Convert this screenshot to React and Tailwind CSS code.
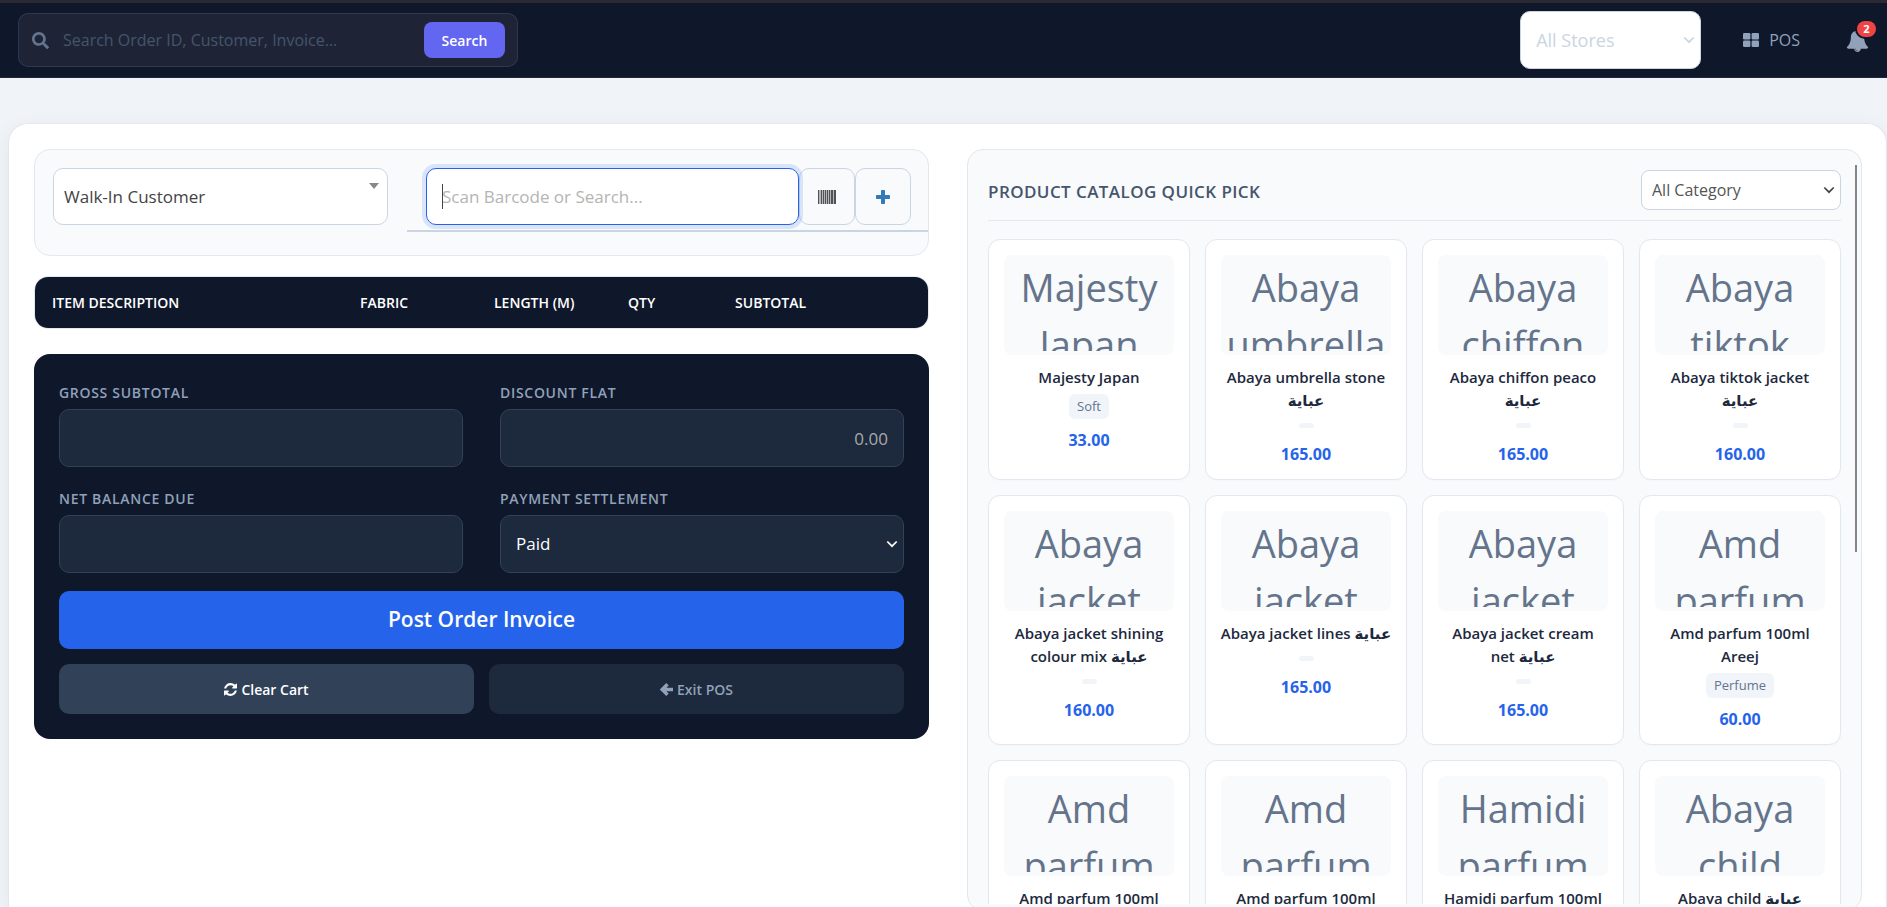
import React from "react";
import { FaSearch } from "react-icons/fa";

const products = [
  { alt: "Majesty Japan", name: "Majesty Japan", tag: "Soft", price: "33.00" },
  { alt: "Abaya umbrella stone", name: "Abaya umbrella stone\nعباية", price: "165.00" },
  { alt: "Abaya chiffon peaco", name: "Abaya chiffon peaco\nعباية", price: "165.00" },
  { alt: "Abaya tiktok jacket", name: "Abaya tiktok jacket\nعباية", price: "160.00" },
  { alt: "Abaya jacket shining", name: "Abaya jacket shining\ncolour mix عباية", price: "160.00" },
  { alt: "Abaya jacket lines", name: "Abaya jacket lines عباية", price: "165.00" },
  { alt: "Abaya jacket cream", name: "Abaya jacket cream\nnet عباية", price: "165.00" },
  { alt: "Amd parfum 100ml", name: "Amd parfum 100ml\nAreej", tag: "Perfume", price: "60.00" },
  { alt: "Amd parfum", name: "Amd parfum 100ml", tag: "Perfume", price: "60.00" },
  { alt: "Amd parfum", name: "Amd parfum 100ml", tag: "Perfume", price: "60.00" },
  { alt: "Hamidi parfum", name: "Hamidi parfum 100ml", tag: "Perfume", price: "60.00" },
  { alt: "Abaya child", name: "Abaya child عباية", price: "160.00" },
];

function Chevron({ className }) {
  return (
    <svg viewBox="0 0 12 8" fill="none" stroke="currentColor" strokeWidth="1.700" className={`pointer-events-none absolute top-1/2 h-2 w-3 -translate-y-1/2 ${className}`}>
      <path d="M1.300 1.500 6 6.200l4.700-4.700" />
    </svg>
  );
}

function GridIcon() {
  return (
    <svg viewBox="0 0 16 14" fill="currentColor" className="h-3.5 w-4">
      <rect x="0" y="0" width="7.400" height="6.400" rx="1.200" />
      <rect x="8.600" y="0" width="7.400" height="6.400" rx="1.200" />
      <rect x="0" y="7.600" width="7.400" height="6.400" rx="1.200" />
      <rect x="8.600" y="7.600" width="7.400" height="6.400" rx="1.200" />
    </svg>
  );
}

function BellIcon() {
  return (
    <svg viewBox="0 0 1792 1792" fill="currentColor" className="size-[23px]">
      <path d="M912 1696q0-16-16-16-59 0-101.500-42.500T752 1536q0-16-16-16t-16 16q0 73 51.500 124.500T896 1712q16 0 16-16zm816-288q0 52-38 90t-90 38h-448q0 106-75 181t-181 75-181-75-75-181H192q-52 0-90-38t-38-90q50-42 91-88t85-119.500 74.500-158.500 50-206T384 576q0-152 117-282.500T808 135q-8-19-8-39 0-40 28-68t68-28 68 28 28 68q0 20-8 39 190 28 307 158.500T1408 576q0 139 19.500 260t50 206 74.500 158.500 85 119.500 91 88z" />
    </svg>
  );
}

function BarcodeIcon() {
  return (
    <svg viewBox="0 0 18 14" className="h-3.5 w-[18px]">
      <path fill="#b4b6ba" d="M0 0h18v14H0z" />
      <path fill="#505256" d="M0 0h1v14H0zM3 0h1v14H3zM5 0h1v14H5zM7 0h1v14H7zM9 0h1v14H9zM11 0h1v14h-1zM13 0h2v14h-2zM16 0h2v14h-2z" />
    </svg>
  );
}

function PlusIcon() {
  return (
    <svg viewBox="0 0 14 14" fill="currentColor" className="size-3.5">
      <path d="M5.800 0h2.400q.8 0 .8.800V5h4.200q.8 0 .8.800v2.400q0 .8-.8.800H9v4.200q0 .8-.8.800H5.800q-.8 0-.8-.8V9H.8Q0 9 0 8.200V5.800Q0 5 .8 5H5V.8Q5 0 5.800 0z" />
    </svg>
  );
}

function ArrowIcon() {
  return (
    <svg viewBox="0 0 13 13" fill="none" stroke="currentColor" strokeWidth="3.400" className="size-[13px]">
      <path d="M7.500 1.200 2.200 6.500l5.300 5.300M2.500 6.500H13" />
    </svg>
  );
}

function RefreshIcon() {
  return (
    <svg viewBox="0 0 1536 1536" fill="currentColor" className="size-[13px]">
      <path d="M1511 928q0 5-1 7-64 268-268 434.500T764 1536q-146 0-282.500-55T238 1324l-129 129q-19 19-45 19t-45-19-19-45V960q0-26 19-45t45-19h448q26 0 45 19t19 45-19 45l-137 137q71 66 161 102t187 36q134 0 250-65t186-179q11-17 53-117 8-23 30-23h192q13 0 22.500 9.500t9.500 22.500zm25-800v448q0 26-19 45t-45 19h-448q-26 0-45-19t-19-45 19-45l138-138Q969 256 768 256q-134 0-250 65T332 500q-11 17-53 117-8 23-30 23H50q-13 0-22.500-9.500T18 608v-7q65-268 270-434.500T768 0q146 0 284 55.500T1297 212l130-129q19-19 45-19t45 19 19 45z" />
    </svg>
  );
}

function Field({ id, label, children }) {
  return (
    <div>
      <label htmlFor={id} className="mb-1.5 block text-[14px] leading-5 font-semibold tracking-wider text-slate-400">{label}</label>
      {children}
    </div>
  );
}

function Product({ p }) {
  return (
    <article className="rounded-xl border border-slate-200 bg-white p-[15px] text-center shadow-[0_1px_3px_rgba(0,0,0,0.02)]">
      <div className="h-[100px] rounded-lg bg-slate-50 p-1">
        <div role="img" aria-label={p.alt} className="h-full overflow-hidden text-[38px] leading-[57px] text-[#64748b]">{p.alt}</div>
      </div>
      <h3 className="-mx-2 mt-[11px] text-[15px] leading-[23px] font-semibold whitespace-pre-line text-slate-800">{p.name}</h3>
      {p.tag ? (
        <span className="mx-auto mt-[5px] mb-[11px] block w-fit rounded-md bg-slate-100 px-2 text-[13px] leading-[25px] text-slate-500">{p.tag}</span>
      ) : (
        <span className="mx-auto mt-[11px] mb-4 block h-[5px] w-[15px] rounded-md bg-slate-100" />
      )}
      <p className="text-[16px] leading-5 font-bold text-[#2563eb]">{p.price}</p>
    </article>
  );
}

export default function App() {
  const darkInput = "block h-[58px] w-full rounded-[10px] border border-slate-700 bg-slate-800 px-[15px] text-[17px] outline-none";
  const addon = "flex h-[57px] w-14 shrink-0 items-center justify-center rounded-[10px] border border-slate-300 bg-slate-50 text-[#337ab7]";
  return (
    <div className="flex h-screen flex-col overflow-hidden bg-[#f0f3f8] font-['Open_Sans','Noto_Sans','DejaVu_Sans',sans-serif] text-slate-800">
      <header className="flex h-[78px] shrink-0 items-center justify-between border-t-[3px] border-b border-t-[#2b2a33] border-b-slate-800 bg-slate-900 pr-[11px] pl-[18px]">
        <form className="flex h-[54px] w-[500px] items-center rounded-[10px] border border-slate-700/70 bg-[#1e2436] pr-3 pl-[13px]">
          <FaSearch className="size-[17px] text-slate-500" />
          <input aria-label="Search" placeholder="Search Order ID, Customer, Invoice..." className="min-w-0 flex-1 bg-transparent pl-3.5 text-[16px] outline-none placeholder:text-slate-600" />
          <button type="button" className="h-9 w-[81px] rounded-lg bg-[#6366f1] text-[14px] font-semibold text-white">Search</button>
        </form>
        <div className="flex items-center">
          <div className="relative">
            <select aria-label="Store" className="block h-[58px] w-[181px] appearance-none rounded-[10px] border border-slate-300 bg-white pl-[15px] text-[18px] text-slate-300">
              <option>All Stores</option>
            </select>
            <Chevron className="right-1.5 text-slate-300" />
          </div>
          <a href="#pos" className="ml-[42px] flex items-center gap-2.5 text-[16px] font-medium text-slate-400">
            <GridIcon />
            POS
          </a>
          <button type="button" aria-label="Notifications" className="relative ml-[46px] flex w-[30px] text-slate-400">
            <BellIcon />
            <span className="absolute -top-2 right-0 h-4 w-[19px] rounded-full bg-[#ef4444] text-center text-[11px] leading-4 font-bold text-white ring-2 ring-slate-900">2</span>
          </button>
        </div>
      </header>

      <main className="mt-[45px] ml-2 grid flex-1 grid-cols-2 items-start gap-[38px] rounded-t-[20px] border border-b-0 border-slate-200 bg-white pt-[25px] pr-6 pl-[25px] shadow-[0_4px_20px_rgba(15,23,42,0.06)]">
        <section className="flex min-w-0 flex-col">
          <div className="grid h-[107px] grid-cols-[335fr_521fr] items-start gap-[19px] rounded-2xl border border-slate-200 bg-slate-50 pt-[18px] pl-[18px]">
            <div className="relative">
              <select aria-label="Customer" className="block h-[57px] w-full appearance-none rounded-[10px] border border-slate-300 bg-white pl-2.5 text-[17px] text-[#444]">
                <option>Walk-In Customer</option>
              </select>
              <svg viewBox="0 0 10 6" fill="#888" className="pointer-events-none absolute top-[15px] right-[9px] h-1.5 w-2.5">
                <path d="M0 0h10L5 6z" />
              </svg>
            </div>
            <div className="flex h-16 items-start border-b-2 border-slate-300 pr-[17px] pl-[19px]">
              <div className="relative min-w-0 flex-1">
                <input aria-label="Scan barcode or search" placeholder="Scan Barcode or Search..." className="block h-[57px] w-full rounded-[10px] border border-[#2563eb] bg-white px-[15px] text-[17px] text-[#444] ring-4 ring-[#2563eb]/15 outline-none placeholder:text-[#b4b4b4]" />
                <span className="pointer-events-none absolute top-4 left-4 h-[25px] w-px bg-[#444]" />
              </div>
              <button type="button" aria-label="Barcode" className={addon}><BarcodeIcon /></button>
              <button type="button" aria-label="Add product" className={addon}><PlusIcon /></button>
            </div>
          </div>

          <div className="mt-5 overflow-hidden rounded-[14px] border border-slate-200">
            <table className="w-full table-fixed bg-slate-900 text-left text-[14px] leading-[51px] text-white">
              <thead>
                <tr>
                  <th className="w-[34.500%] pl-[17px] font-semibold">ITEM DESCRIPTION</th>
                  <th className="w-[15%] pl-[17px] font-semibold">FABRIC</th>
                  <th className="w-[15%] pl-[17px] font-semibold">LENGTH (M)</th>
                  <th className="w-[12%] pl-[17px] font-semibold">QTY</th>
                  <th className="pl-[17px] font-semibold">SUBTOTAL</th>
                </tr>
              </thead>
            </table>
          </div>

          <div className="mt-[25px] rounded-2xl bg-slate-900 p-[25px]">
            <div className="grid grid-cols-2 gap-x-[37px] gap-y-[22px] pt-1">
              <Field id="gross" label="GROSS SUBTOTAL"><input id="gross" readOnly className={darkInput} /></Field>
              <Field id="discount" label="DISCOUNT FLAT"><input id="discount" placeholder="0.00" className={`${darkInput} text-right placeholder:text-[#a9a9a9]`} /></Field>
              <Field id="net" label="NET BALANCE DUE"><input id="net" readOnly className={darkInput} /></Field>
              <Field id="payment" label="PAYMENT SETTLEMENT">
                <div className="relative">
                  <select id="payment" className={`${darkInput} appearance-none text-white`}><option>Paid</option></select>
                  <Chevron className="right-1.5 text-white" />
                </div>
              </Field>
            </div>
            <button type="button" className="mt-[18px] h-[58px] w-full rounded-[10px] bg-[#2563eb] text-[21px] font-semibold text-white">Post Order Invoice</button>
            <div className="mt-[15px] grid grid-cols-2 gap-[15px]">
              <button type="button" className="flex h-[50px] items-center justify-center gap-1 rounded-[10px] bg-slate-700 text-[14px] font-semibold text-white"><RefreshIcon />Clear Cart</button>
              <button type="button" className="flex h-[50px] items-center justify-center gap-1 rounded-[10px] bg-slate-800 text-[14px] font-semibold text-slate-400"><ArrowIcon />Exit POS</button>
            </div>
          </div>
        </section>

        <section className="h-[calc(100vh-145px)] min-w-0 rounded-2xl border border-slate-200 bg-slate-50 pt-[15px] pr-1 pb-1.5 pl-5">
          <div className="flex h-full items-start overflow-hidden">
            <div className="min-w-0 flex-1">
              <div className="flex h-14 items-start justify-between border-b border-slate-200 pt-[5px]">
                <h2 className="text-[17px] leading-[44px] font-semibold tracking-wide text-slate-600">PRODUCT CATALOG QUICK PICK</h2>
                <div className="relative">
                  <select aria-label="Category" className="block h-10 w-[200px] appearance-none rounded-lg border border-slate-300 bg-white pl-2.5 text-[16px] text-[#555]">
                    <option>All Category</option>
                  </select>
                  <Chevron className="right-1.5 text-[#444]" />
                </div>
              </div>
              <div className="mt-[18px] grid grid-cols-4 gap-[15px]">
                {products.map((p, i) => <Product key={i} p={p} />)}
              </div>
            </div>
            <div className="ml-3.5 h-[387px] w-0.5 bg-[#858585]" />
          </div>
        </section>
      </main>
    </div>
  );
}
